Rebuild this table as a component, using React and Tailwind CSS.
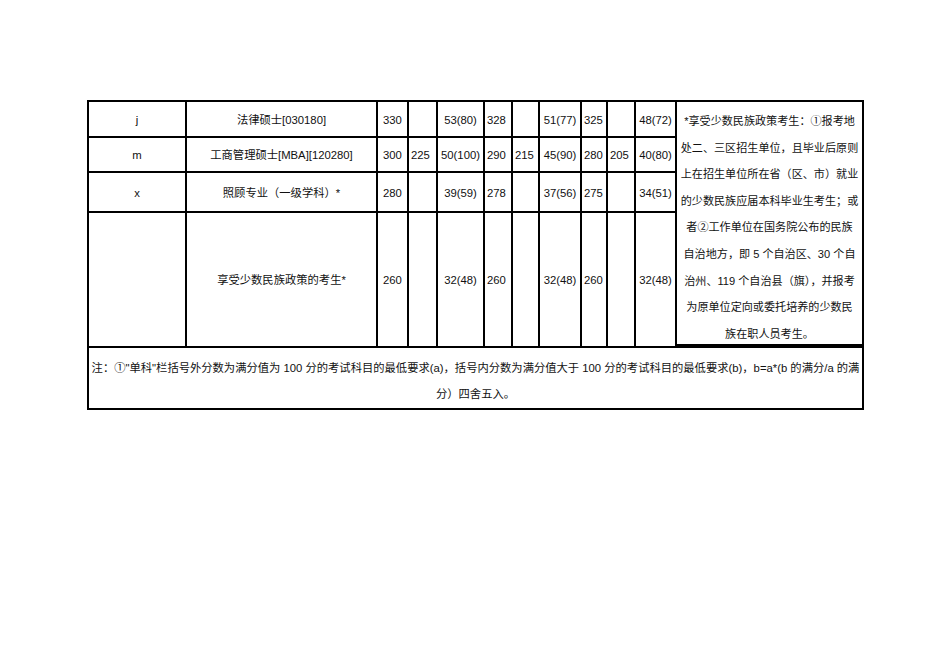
import React from "react";

const rows = [
  ["j", "法律硕士[030180]", "330", "", "53(80)", "328", "", "51(77)", "325", "", "48(72)"],
  ["m", "工商管理硕士[MBA][120280]", "300", "225", "50(100)", "290", "215", "45(90)", "280", "205", "40(80)"],
  ["x", "照顾专业（一级学科）*", "280", "", "39(59)", "278", "", "37(56)", "275", "", "34(51)"],
  ["", "享受少数民族政策的考生*", "260", "", "32(48)", "260", "", "32(48)", "260", "", "32(48)"],
];

const alignClass = [
  "justify-center",
  "justify-center",
  "justify-start pl-[5px]",
  "justify-start pl-[2px]",
  "justify-center",
  "justify-start pl-[2px]",
  "justify-start pl-[2px]",
  "justify-center",
  "justify-start pl-[2px]",
  "justify-start pl-[2px]",
  "justify-center",
];

const noteLines = [
  "*享受少数民族政策考生：①报考地",
  "处二、三区招生单位，且毕业后原则",
  "上在招生单位所在省（区、市）就业",
  "的少数民族应届本科毕业生考生；或",
  "者②工作单位在国务院公布的民族",
  "自治地方，即 5 个自治区、30 个自",
  "治州、119 个自治县（旗），并报考",
  "为原单位定向或委托培养的少数民",
  "族在职人员考生。",
];

export default function App() {
  return (
    <div
      className="w-[950px] h-[672px] bg-white overflow-hidden text-[#111]"
      style={{ fontFamily: '"Liberation Sans", "Noto Sans CJK SC", sans-serif' }}
    >
      <div className="ml-[87px] mt-[100px] w-[777px] grid grid-cols-[98px_191px_31px_29px_47px_28px_27px_42px_26px_28px_41px_187px] grid-rows-[36px_35px_40px_135px_62px] border-l-2 border-t-2 border-black text-[11.3px]">
        {rows.map((row, r) =>
          row.map((cell, c) => (
            <div
              key={`${r}-${c}`}
              className={`flex items-center pt-[2px] whitespace-nowrap border-r-2 border-b-2 border-black ${alignClass[c]}`}
              style={{ gridRow: r + 1, gridColumn: c + 1 }}
            >
              {cell}
            </div>
          ))
        )}
        <div className="col-start-12 row-start-1 row-span-4 border-r-2 border-b-4 border-black pt-[6px] leading-[26.6px] text-center text-[11.1px]">
          {noteLines.map((l, i) => (
            <div key={i} className="whitespace-nowrap">
              {l}
            </div>
          ))}
        </div>
        <div className="col-start-1 col-span-12 row-start-5 border-r-2 border-b-2 border-black pt-[7px] leading-[26px] text-center">
          <div className="whitespace-nowrap">
            注：①"单科"栏括号外分数为满分值为 100 分的考试科目的最低要求(a)，括号内分数为满分值大于 100 分的考试科目的最低要求(b)，b=a*(b 的满分/a 的满
          </div>
          <div className="whitespace-nowrap">分）四舍五入。</div>
        </div>
      </div>
    </div>
  );
}
